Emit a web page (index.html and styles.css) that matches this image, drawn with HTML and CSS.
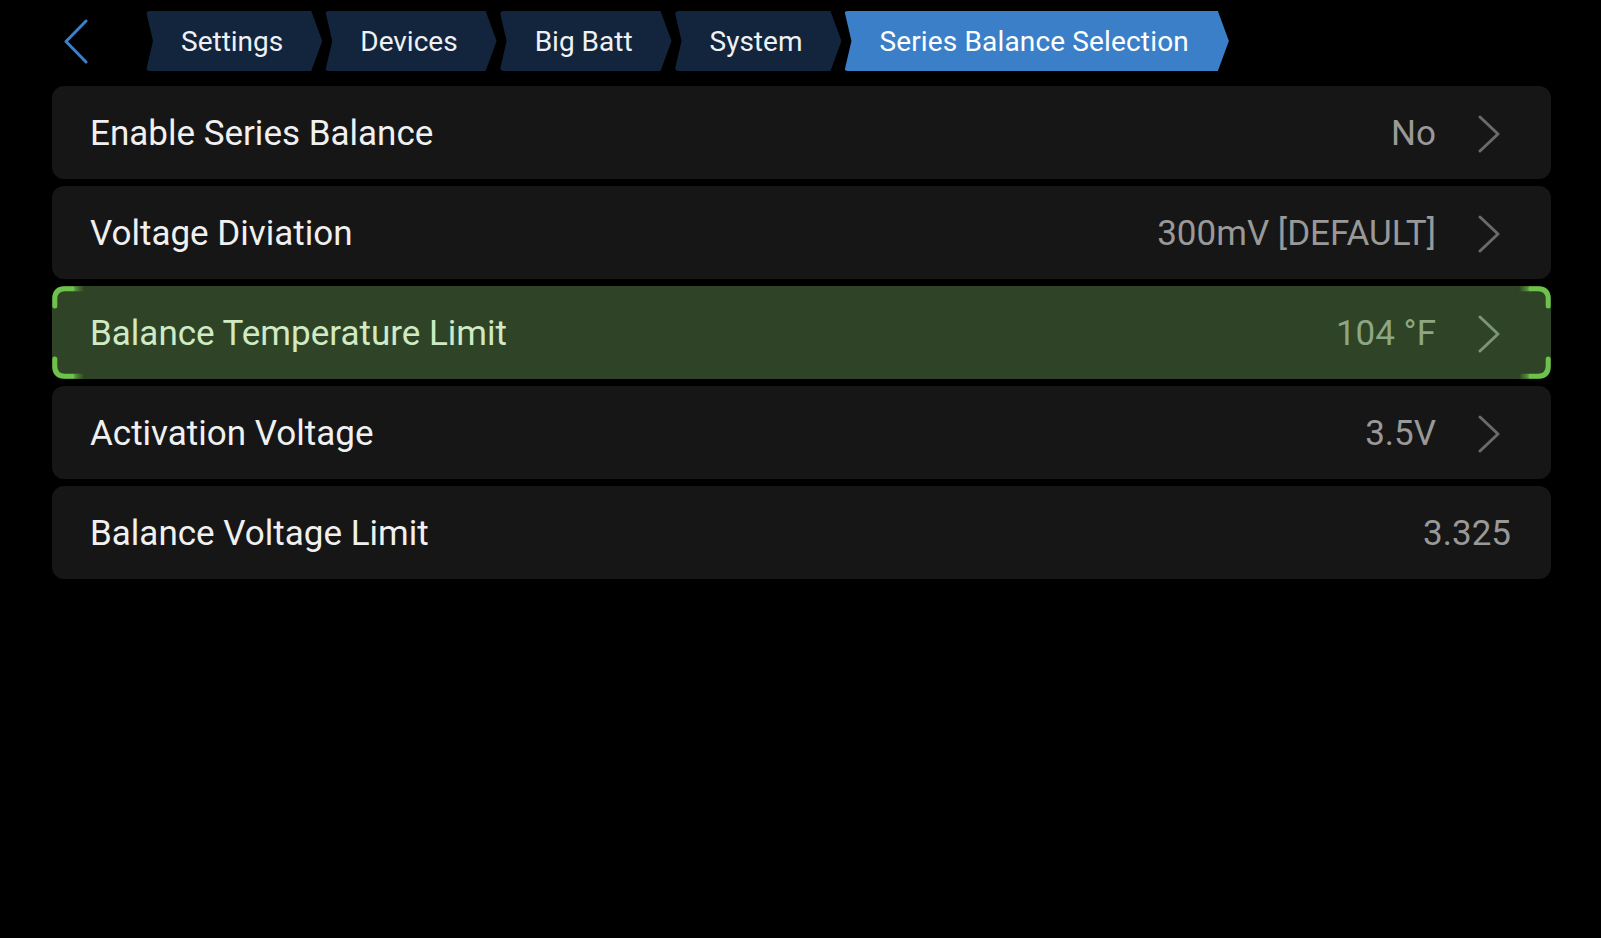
FILE: index.html
```html
<!DOCTYPE html>
<html lang="en">
<head>
<meta charset="utf-8">
<title>Series Balance Selection</title>
<link rel="stylesheet" href="styles.css">
</head>
<body>
<div class="page">
  <header class="header">
    <button class="back" aria-label="Back">
      <svg width="26" height="45" viewBox="0 0 26 45"><path d="M23 2 L3 22.5 L23 43" fill="none" stroke="#3b80cc" stroke-width="3" stroke-linecap="round" stroke-linejoin="round"/></svg>
    </button>
    <nav class="crumbs">
      <span class="crumb">Settings</span>
      <span class="crumb">Devices</span>
      <span class="crumb">Big Batt</span>
      <span class="crumb">System</span>
      <span class="crumb active">Series Balance Selection</span>
    </nav>
  </header>
  <main class="list">
    <div class="row">
      <span class="label">Enable Series Balance</span>
      <span class="value">No</span>
      <svg class="chev" width="22" height="38" viewBox="0 0 22 38"><path d="M2 2 L20 19 L2 36" fill="none" stroke="currentColor" stroke-width="3" stroke-linecap="round" stroke-linejoin="round"/></svg>
    </div>
    <div class="row">
      <span class="label">Voltage Diviation</span>
      <span class="value">300mV [DEFAULT]</span>
      <svg class="chev" width="22" height="38" viewBox="0 0 22 38"><path d="M2 2 L20 19 L2 36" fill="none" stroke="currentColor" stroke-width="3" stroke-linecap="round" stroke-linejoin="round"/></svg>
    </div>
    <div class="row selected">
      <span class="label">Balance Temperature Limit</span>
      <span class="value">104 °F</span>
      <svg class="chev" width="22" height="38" viewBox="0 0 22 38"><path d="M2 2 L20 19 L2 36" fill="none" stroke="currentColor" stroke-width="3" stroke-linecap="round" stroke-linejoin="round"/></svg>
      <svg class="focus" width="1499" height="93" viewBox="0 0 1499 93">
        <defs>
          <linearGradient id="fl" gradientUnits="userSpaceOnUse" x1="18" y1="0" x2="32" y2="0">
            <stop offset="0" stop-color="#6cc24a"/><stop offset="1" stop-color="#6cc24a" stop-opacity="0"/>
          </linearGradient>
          <linearGradient id="fr" gradientUnits="userSpaceOnUse" x1="1481" y1="0" x2="1467" y2="0">
            <stop offset="0" stop-color="#6cc24a"/><stop offset="1" stop-color="#6cc24a" stop-opacity="0"/>
          </linearGradient>
        </defs>
        <g fill="none" stroke-width="5" stroke-linecap="round">
          <path d="M2.8 20 V13 Q2.8 2.8 13 2.8 H20" stroke="#6cc24a"/>
          <path d="M20 2.8 H32" stroke="url(#fl)" stroke-linecap="butt"/>
          <path d="M2.8 73 V80 Q2.8 90.2 13 90.2 H20" stroke="#6cc24a"/>
          <path d="M20 90.2 H32" stroke="url(#fl)" stroke-linecap="butt"/>
          <path d="M1496.2 20 V13 Q1496.2 2.8 1486 2.8 H1479" stroke="#6cc24a"/>
          <path d="M1479 2.8 H1467" stroke="url(#fr)" stroke-linecap="butt"/>
          <path d="M1496.2 73 V80 Q1496.2 90.2 1486 90.2 H1479" stroke="#6cc24a"/>
          <path d="M1479 90.2 H1467" stroke="url(#fr)" stroke-linecap="butt"/>
        </g>
      </svg>
    </div>
    <div class="row">
      <span class="label">Activation Voltage</span>
      <span class="value">3.5V</span>
      <svg class="chev" width="22" height="38" viewBox="0 0 22 38"><path d="M2 2 L20 19 L2 36" fill="none" stroke="currentColor" stroke-width="3" stroke-linecap="round" stroke-linejoin="round"/></svg>
    </div>
    <div class="row">
      <span class="label">Balance Voltage Limit</span>
      <span class="value">3.325</span>
    </div>
  </main>
</div>
</body>
</html>
```

FILE: styles.css
```css
* { box-sizing: border-box; }

html, body {
  margin: 0;
  padding: 0;
  background: #000;
}

body {
  font-family: Roboto, "Liberation Sans", sans-serif;
  color: #f4f4f4;
  width: 1601px;
  height: 938px;
  overflow: hidden;
}

.page {
  display: flex;
  flex-direction: column;
}

.header {
  display: flex;
  align-items: center;
  height: 60px;
  margin-top: 11px;
  padding-left: 63px;
}

.back {
  background: none;
  border: 0;
  padding: 0;
  width: 26px;
  height: 45px;
  display: flex;
  align-items: center;
  cursor: pointer;
}

.crumbs {
  display: flex;
  height: 60px;
  margin-left: 57px;
}

.crumb {
  display: flex;
  align-items: center;
  height: 60px;
  padding: 2px 39px 0 35px;
  margin-right: 3px;
  background: #13253c;
  color: #eef1f5;
  font-size: 28px;
  line-height: 1;
  white-space: nowrap;
  clip-path: polygon(0 0, calc(100% - 11px) 0, 100% 50%, calc(100% - 11px) 100%, 0 100%, 7px 50%);
  border-radius: 4px;
}

.crumb.active {
  background: #3b7fc8;
  color: #fff;
  padding-right: 40px;
  letter-spacing: 0.15px;
}

.list {
  display: flex;
  flex-direction: column;
  gap: 7px;
  margin: 15px 50px 0 52px;
}

.row {
  position: relative;
  display: flex;
  align-items: center;
  height: 93px;
  padding: 2px 40px 0 38px;
  background: #161616;
  border-radius: 12px;
}

.label {
  flex: 1;
  font-size: 35px;
  color: #f0f0f0;
  white-space: nowrap;
}

.value {
  font-size: 35px;
  color: #999;
  white-space: nowrap;
}

.chev {
  color: #6a6a6a;
  margin-left: 42px;
  margin-right: 11px;
}

.row.selected {
  background: #2f4426;
}

.row.selected .label {
  color: #cfeac4;
}

.row.selected .value {
  color: #8da683;
}

.row.selected .chev {
  color: #7d9672;
}

.focus {
  position: absolute;
  left: 0;
  top: 0;
  pointer-events: none;
}
```
